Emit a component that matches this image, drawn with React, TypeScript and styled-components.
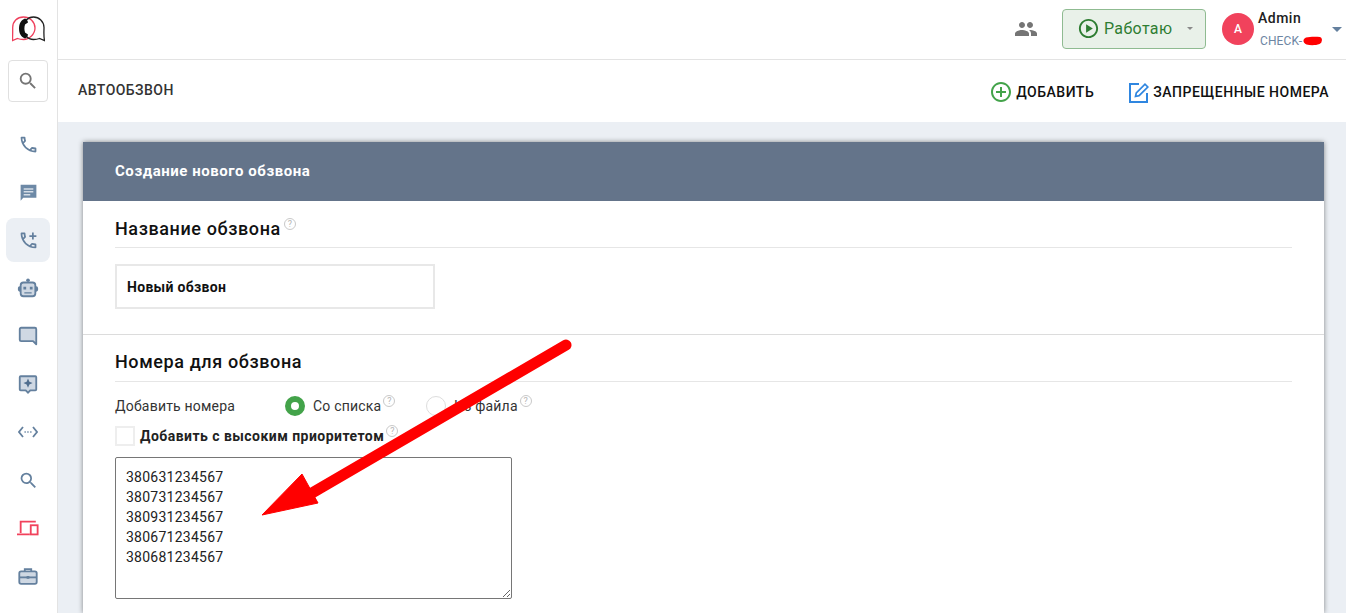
import React from "react"
import styled, { createGlobalStyle } from "styled-components"
import {
  MdOutlinePhone,
  MdOutlineAddIcCall,
  MdSearch,
  MdPeople,
  MdOutlinePlayCircle,
  MdOutlineAddCircleOutline,
} from "react-icons/md"

const GlobalStyle = createGlobalStyle`
  html, body { margin: 0; padding: 0; height: 613px; overflow: hidden; background: #fff; }
  * { box-sizing: border-box; }
  body { font-family: Roboto, "Liberation Sans", sans-serif; color: #111; }
`

const Page = styled.div`
  display: flex;
  position: relative;
  width: 1346px;
  height: 613px;
  overflow: hidden;
`

const Sidebar = styled.aside`
  flex: 0 0 58px;
  border-right: 1px solid #e3e3e3;
  display: flex;
  flex-direction: column;
  align-items: center;
  background: #fff;
  padding-right: 1px;
`

const Logo = styled.div`
  height: 60px;
  display: flex;
  align-items: center;
  justify-content: center;
  padding-bottom: 2px;
`

const SearchBox = styled.div`
  width: 40px;
  height: 42px;
  border: 1px solid #e0e0e0;
  border-radius: 4px;
  display: flex;
  align-items: center;
  justify-content: center;
  color: #757575;
  font-size: 22px;
  margin-bottom: 20px;
`

const NavItem = styled.div<{ $active?: boolean; $color?: string }>`
  width: 44px;
  height: 44px;
  margin-bottom: 4px;
  border-radius: 8px;
  display: flex;
  align-items: center;
  justify-content: center;
  font-size: 21px;
  color: ${(p) => p.$color || "#64809e"};
  background: ${(p) => (p.$active ? "#ebeff4" : "transparent")};
`

const Main = styled.div`
  flex: 1;
  display: flex;
  flex-direction: column;
  min-width: 0;
`

const TopBar = styled.header`
  height: 60px;
  flex: none;
  border-bottom: 1px solid #e3e3e3;
  display: flex;
  align-items: center;
  justify-content: flex-end;
  padding-bottom: 2px;
`

const PeopleIcon = styled.div`
  display: flex;
  color: #757575;
  font-size: 24px;
  margin-right: 24px;
`

const StatusButton = styled.div`
  width: 144px;
  height: 40px;
  border: 1px solid #8fbb91;
  border-radius: 4px;
  background: #e9f1e9;
  color: #2e7d32;
  display: flex;
  align-items: center;
  padding-left: 14px;
  font-size: 16px;
  font-weight: 400;
  margin-right: 16px;
  letter-spacing: 0.35px;
  svg {
    font-size: 23px;
    margin-right: 4px;
  }
`

const Caret = styled.span<{ $color: string; $size: number }>`
  width: 0;
  height: 0;
  border-left: ${(p) => p.$size}px solid transparent;
  border-right: ${(p) => p.$size}px solid transparent;
  border-top: ${(p) => p.$size}px solid ${(p) => p.$color};
`

const StatusCaret = styled(Caret)`
  margin-left: 15px;
`

const Avatar = styled.div`
  width: 32px;
  height: 32px;
  border-radius: 50%;
  background: #f1425c;
  color: #fff;
  display: flex;
  align-items: center;
  justify-content: center;
  font-size: 12px;
  font-weight: 500;
  margin-right: 4px;
`

const UserInfo = styled.div`
  display: flex;
  flex-direction: column;
  width: 74px;
  margin-top: 1px;
`

const UserName = styled.span`
  font-size: 14px;
  font-weight: 500;
  line-height: 18px;
  letter-spacing: 0.5px;
  color: #212121;
`

const UserCompany = styled.span`
  position: relative;
  font-size: 12px;
  line-height: 16px;
  margin-top: 6px;
  margin-left: 2px;
  letter-spacing: 0.1px;
  color: #6d86a3;
`

const Scribble = styled.svg`
  position: absolute;
  left: 43px;
  top: 3px;
`

const UserCaret = styled(Caret)`
  margin-right: 4px;
  margin-top: 2px;
`

const SubBar = styled.div`
  height: 62px;
  flex: none;
  display: flex;
  align-items: center;
  justify-content: space-between;
  padding: 0 17px 3px 20px;
`

const PageTitle = styled.h1`
  margin: 0;
  font-size: 14px;
  font-weight: 500;
  letter-spacing: 0.45px;
  color: #333;
`

const Actions = styled.div`
  display: flex;
  align-items: center;
  gap: 34px;
  margin-top: 5px;
`

const Action = styled.div`
  display: flex;
  align-items: center;
  gap: 3px;
  font-size: 14px;
  font-weight: 500;
  letter-spacing: 0.5px;
  color: #111;
`

const Content = styled.main`
  flex: 1;
  background: #ebeff4;
  padding: 20px 22px 0 25px;
  min-height: 0;
`

const Card = styled.section`
  background: #fff;
  height: 100%;
  box-shadow: 0 0 5px rgba(0, 0, 0, 0.45);
`

const CardHeader = styled.div`
  height: 59px;
  background: #64748a;
  color: #fff;
  display: flex;
  align-items: center;
  padding: 0 0 1px 32px;
  font-size: 15px;
  font-weight: 700;
  letter-spacing: 0.55px;
`

const Section = styled.div<{ $divided?: boolean }>`
  padding: 0 32px;
  border-top: ${(p) => (p.$divided ? "1px solid #dcdcdc" : "none")};
`

const SectionTitle = styled.h2<{ $top: number }>`
  margin: 0;
  height: 47px;
  padding-top: ${(p) => p.$top}px;
  border-bottom: 1px solid #e6e6e6;
  font-size: 18px;
  line-height: 22px;
  font-weight: 500;
  letter-spacing: 0.6px;
  color: #111;
  display: flex;
  align-items: flex-start;
`

const NameInput = styled.div`
  width: 320px;
  height: 45px;
  margin: 16px 0 25px;
  border: 2px solid #e8e8e8;
  display: flex;
  align-items: center;
  padding-left: 10px;
  font-size: 14px;
  font-weight: 700;
  letter-spacing: 0.3px;
`

const Help = styled.span`
  width: 12px;
  height: 12px;
  margin-left: 2px;
  margin-top: -11px;
  flex: none;
  border: 1px solid #c9c9c9;
  border-radius: 50%;
  color: #b5b5b5;
  font-size: 9px;
  line-height: 10px;
  font-weight: 400;
  letter-spacing: 0;
  text-align: center;
`

const TitleHelp = styled(Help)`
  margin-top: 0;
  margin-left: 3px;
`

const RadioRow = styled.div`
  display: flex;
  align-items: center;
  height: 20px;
  margin-top: 14px;
  font-size: 14px;
  letter-spacing: 0.2px;
  color: #333;
`

const RadioLabel = styled.span`
  width: 170px;
`

const RadioOption = styled.span<{ $width: number }>`
  display: flex;
  align-items: center;
  width: ${(p) => p.$width}px;
`

const RadioMark = styled.span<{ $on?: boolean }>`
  width: 20px;
  height: 20px;
  margin-right: 8px;
  border-radius: 50%;
  background: #fff;
  border: ${(p) => (p.$on ? "6px solid #43a34a" : "1px solid #ddd")};
`

const CheckRow = styled.div`
  display: flex;
  align-items: center;
  height: 20px;
  margin-top: 10px;
  font-size: 14px;
  font-weight: 700;
  letter-spacing: 0.46px;
  color: #222;
`

const CheckMark = styled.span`
  width: 20px;
  height: 20px;
  margin-right: 5px;
  border: 2px solid #eee;
`

const Numbers = styled.textarea`
  display: block;
  width: 397px;
  height: 142px;
  margin-top: 11px;
  padding: 9px 10px;
  border: 1px solid #767676;
  border-radius: 2px;
  font-family: Roboto, "Liberation Sans", sans-serif;
  font-size: 14px;
  line-height: 20px;
  letter-spacing: 0.25px;
  color: #222;
  outline: none;
`

const Overlay = styled.svg`
  position: absolute;
  left: 0;
  top: 0;
  pointer-events: none;
`

const numbers = [
  "380631234567",
  "380731234567",
  "380931234567",
  "380671234567",
  "380681234567",
].join("\n")

// two speech bubbles with a handset, the product logo
const LogoMark = () => (
  <svg width="33" height="26" viewBox="0 0 33 26" fill="none">
    <path d="M11.500 1C5 1 .7 5.500.7 11.500c0 4 0 8.500-.2 13l5-2c1.800.7 3.800 1 6 1C17.500 23.500 23 18 23 12S18 1 11.500 1z" stroke="#ef3f5c" strokeWidth="1.300" />
    <path d="M21.500 1C27 1 32 5.500 32 11.500c0 4-.5 8.500.5 13l-5-2c-1.800.7-3.800 1-6 1C15.500 23.500 11 18 11 12S15.500 1 21.500 1z" stroke="#222" strokeWidth="1.300" />
    <path d="M13 2.500C9 4 7 7.500 7 12.500s2 8.500 6 10c1.500-.5 2.700-2 3-4l-3-2c-.8-2.500-.8-5.500 0-8l3-2c-.3-2-1.500-3.500-3-4z" fill="#111" />
  </svg>
)

const ChatIcon = () => (
  <svg width="21" height="21" viewBox="0 0 24 24">
    <path d="M3 3h18v15H6l-3 3.500z" fill="#6d89a6" />
    <path d="M6.500 7h11v1.800h-11zM6.500 10.300h11v1.800h-11zM6.500 13.600h7.500v1.800h-7.500z" fill="#d5dde6" />
  </svg>
)

const BubbleIcon = () => (
  <svg width="22" height="22" viewBox="0 0 24 24">
    <path d="M3 4.500a1.500 1.500 0 0 1 1.500-1.500h15A1.500 1.500 0 0 1 21 4.500V21l-3.500-3.500h-13A1.500 1.500 0 0 1 3 16z" fill="#cfd8e3" stroke="#64809e" strokeWidth="2" strokeLinejoin="round" />
  </svg>
)

const SparkIcon = () => (
  <svg width="22" height="22" viewBox="0 0 24 24">
    <path d="M4 3.500h16a1 1 0 0 1 1 1V18a1 1 0 0 1-1 1h-5.500L12 21.500 9.500 19H4a1 1 0 0 1-1-1V4.500a1 1 0 0 1 1-1z" fill="#cfd8e3" stroke="#64809e" strokeWidth="2" />
    <path d="M12 6l1.500 3.500L17 11l-3.500 1.500L12 16l-1.500-3.500L7 11l3.500-1.500z" fill="#4f6d8e" />
  </svg>
)

const CodeIcon = () => (
  <svg width="20" height="20" viewBox="0 0 20 20" fill="none" stroke="#64809e" strokeWidth="1.800">
    <path d="M5 5L1 10l4 5M15 5l4 5-4 5" />
    <path d="M6.500 10h1.300M9.300 10h1.300M12.200 10h1.300" strokeWidth="1.500" />
  </svg>
)

const RobotIcon = () => (
  <svg width="22" height="22" viewBox="0 0 24 24">
    <circle cx="12" cy="3.500" r="2" fill="#64809e" />
    <rect x="1" y="10" width="22" height="6" rx="2" fill="#64809e" />
    <rect x="4" y="6" width="16" height="15" rx="3" fill="#cfd8e3" stroke="#64809e" strokeWidth="2" />
    <path d="M7 10.500h3v3H7zM14 10.500h3v3h-3zM8 16.500h8v1.600H8z" fill="#64809e" />
  </svg>
)

const DevicesIcon = () => (
  <svg width="22" height="22" viewBox="0 0 24 24" fill="none" stroke="#f1425c" strokeWidth="2">
    <path d="M4 17.500V5h16.500M0 19h14" />
    <rect x="15" y="9" width="7.500" height="10" />
  </svg>
)

const CaseIcon = () => (
  <svg width="22" height="22" viewBox="0 0 24 24">
    <path d="M8.500 7V4.500h7V7" fill="none" stroke="#64809e" strokeWidth="2" />
    <rect x="2.500" y="7" width="19" height="13.500" rx="2" fill="#cfd8e3" stroke="#64809e" strokeWidth="2" />
    <path d="M3 13.500h18" stroke="#64809e" strokeWidth="2" />
    <rect x="10.500" y="12" width="3" height="3" fill="#64809e" />
  </svg>
)

const AddIcon = () => <MdOutlineAddCircleOutline size={24} color="#43a34a" />

const EditIcon = () => (
  <svg width="22" height="22" viewBox="0 0 22 22" fill="none" stroke="#2f86e0" strokeWidth="2">
    <path d="M11 3H2v18h17v-9" />
    <path d="M7.500 15.500l.8-3.500L17 3.200l2.800 2.800-8.700 8.700z" strokeWidth="1.700" />
  </svg>
)

export default function App() {
  return (
    <Page>
      <GlobalStyle />
      <Sidebar>
        <Logo>
          <LogoMark />
        </Logo>
        <SearchBox>
          <MdSearch />
        </SearchBox>
        <NavItem><MdOutlinePhone /></NavItem>
        <NavItem><ChatIcon /></NavItem>
        <NavItem $active><MdOutlineAddIcCall /></NavItem>
        <NavItem><RobotIcon /></NavItem>
        <NavItem><BubbleIcon /></NavItem>
        <NavItem><SparkIcon /></NavItem>
        <NavItem><CodeIcon /></NavItem>
        <NavItem><MdSearch /></NavItem>
        <NavItem><DevicesIcon /></NavItem>
        <NavItem><CaseIcon /></NavItem>
      </Sidebar>
      <Main>
        <TopBar>
          <PeopleIcon><MdPeople /></PeopleIcon>
          <StatusButton>
            <MdOutlinePlayCircle />
            Работаю
            <StatusCaret $color="#8a8a8a" $size={3} />
          </StatusButton>
          <Avatar>A</Avatar>
          <UserInfo>
            <UserName>Admin</UserName>
            <UserCompany>
              CHECK-
              <Scribble width="20" height="10" viewBox="0 0 20 10">
                <path d="M3 1.500C7 .500 13 .500 17 1c2.500.8 2.800 5-.5 7-4 1.500-9 1.500-13 .5C-.5 7-.5 3 3 1.500z" fill="#f00" />
              </Scribble>
            </UserCompany>
          </UserInfo>
          <UserCaret $color="#64809e" $size={5} />
        </TopBar>
        <SubBar>
          <PageTitle>АВТООБЗВОН</PageTitle>
          <Actions>
            <Action>
              <AddIcon />
              ДОБАВИТЬ
            </Action>
            <Action>
              <EditIcon />
              ЗАПРЕЩЕННЫЕ НОМЕРА
            </Action>
          </Actions>
        </SubBar>
        <Content>
          <Card>
            <CardHeader>Создание нового обзвона</CardHeader>
            <Section>
              <SectionTitle $top={17}>
                Название обзвона
                <TitleHelp>?</TitleHelp>
              </SectionTitle>
              <NameInput>Новый обзвон</NameInput>
            </Section>
            <Section $divided>
              <SectionTitle $top={16}>Номера для обзвона</SectionTitle>
              <RadioRow>
                <RadioLabel>Добавить номера</RadioLabel>
                <RadioOption $width={141}>
                  <RadioMark $on />
                  Со списка
                  <Help>?</Help>
                </RadioOption>
                <RadioOption $width={120}>
                  <RadioMark />
                  Из файла
                  <Help>?</Help>
                </RadioOption>
              </RadioRow>
              <CheckRow>
                <CheckMark />
                Добавить с высоким приоритетом
                <Help>?</Help>
              </CheckRow>
              <Numbers defaultValue={numbers} spellCheck={false} />
            </Section>
          </Card>
        </Content>
      </Main>
      <Overlay width="1346" height="613" viewBox="0 0 1346 613">
        <path d="M566 345L312 493" stroke="#f00" strokeWidth="11" strokeLinecap="round" />
        <path d="M262 515L302 474L318 503z" fill="#f00" stroke="#f00" strokeWidth="1" />
      </Overlay>
    </Page>
  )
}
